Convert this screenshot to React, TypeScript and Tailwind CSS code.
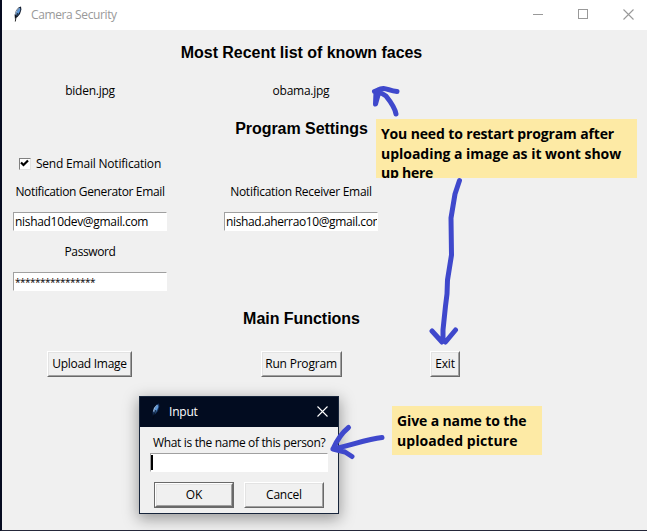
import type { ReactNode } from "react";

const uiFont = "font-['Open_Sans','Noto_Sans',sans-serif]";

function Feather({ dark = false }: { dark?: boolean }) {
  return (
    <svg width="10" height="16" viewBox="0 0 10 16" className="mb-[2px] shrink-0">
      <path d="M2 13.500 L1.600 9 L3 4.500 L5.500 1.500 L8 0.600 L8.400 3.500 L7 8 L4.500 11 L2.500 12 Z" fill={dark ? "#17345f" : "#111827"} />
      <path d="M3 9.500 L4 5 L7 1.600 L7.400 4 L5.700 8 L3.400 10.500 Z" fill="#5b96d8" />
      <path d="M2.500 8.500 L3.500 5 L6 2.200" stroke="#c3dcf5" strokeWidth="0.9" fill="none" />
      <path d="M2.300 15.500 L3 11 L5 7" stroke={dark ? "#050a14" : "#111"} strokeWidth="0.9" fill="none" />
    </svg>
  );
}

function Heading({ children }: { children: ReactNode }) {
  return (
    <h2 className="col-start-2 justify-self-center pt-[2px] pl-px whitespace-nowrap font-['Liberation_Sans',Arial,sans-serif] text-[16px] leading-5 font-bold tracking-[-0.04px]">
      {children}
    </h2>
  );
}

function Label({ children, track = "tracking-[-0.2px]" }: { children: ReactNode; track?: string }) {
  return <span className={`justify-self-center whitespace-nowrap ${track}`}>{children}</span>;
}

function Entry({ children, track }: { children: ReactNode; track: string }) {
  return (
    <div className={`flex h-[19px] w-[154px] items-center justify-self-center overflow-hidden border border-t-[#a0a0a0] border-r-white border-b-white border-l-[#a0a0a0] bg-white pl-px whitespace-nowrap ${track}`}>
      {children}
    </div>
  );
}

function Button({ children, size, track = "tracking-[-0.2px]" }: { children: ReactNode; size: string; track?: string }) {
  return (
    <button className={`${size} ${track} border border-t-white border-r-[#696969] border-b-[#696969] border-l-white bg-[#f0f0f0] whitespace-nowrap`}>
      <span className="flex h-full w-full items-center justify-center border border-t-[#e3e3e3] border-r-[#a0a0a0] border-b-[#a0a0a0] border-l-[#e3e3e3]">
        {children}
      </span>
    </button>
  );
}

function Close({ color }: { color: string }) {
  return (
    <svg width="11" height="11" viewBox="0 0 11 11" className="mb-px">
      <path d="M0.500 0.500 L10.500 10.500 M10.500 0.500 L0.500 10.500" stroke={color} strokeWidth="1.1" />
    </svg>
  );
}

export default function App() {
  return (
    <div className={`relative h-[531px] w-[647px] overflow-hidden border-b border-l-2 border-b-[#25283a] border-l-[#060b20] bg-[#f0f0f0] text-[12px] leading-4 text-black ${uiFont}`}>
      <header className="flex h-[30px] items-center bg-white pl-[11px] text-[#999]">
        <Feather />
        <span className="ml-[8px] tracking-[-0.38px]">Camera Security</span>
        <div className="mr-[13px] ml-auto flex items-center gap-[35px]">
          <span className="mb-px h-px w-[10px] bg-[#999]" />
          <span className="mb-[2px] h-[10px] w-[10px] border border-[#999]" />
          <Close color="#999" />
        </div>
      </header>

      <main className="grid grid-cols-[176px_246px_42px] grid-rows-[44px_34px_40px_30px_27px_33px_28px_31px_42px_50px] items-center">
        <Heading>Most Recent list of known faces</Heading>
        <span />
        <Label track="tracking-[-0.25px]">biden.jpg</Label>
        <Label track="tracking-[-0.25px]">obama.jpg</Label>
        <span />
        <Heading>Program Settings</Heading>
        <span />
        <label className="flex items-center gap-[5px] justify-self-center pt-px whitespace-nowrap">
          <span className="flex h-3 w-3 items-center justify-center border border-t-[#808080] border-r-[#e3e3e3] border-b-[#e3e3e3] border-l-[#808080] bg-white">
            <svg width="9" height="9" viewBox="0 0 9 9">
              <path d="M1 3.500 L3.500 6 L8 1.500" stroke="#000" strokeWidth="2.2" fill="none" />
            </svg>
          </span>
          <span className="pt-px tracking-[-0.2px]">Send Email Notification</span>
        </label>
        <span />
        <span />
        <Label track="tracking-[-0.36px]">Notification Generator Email</Label>
        <Label track="tracking-[-0.27px]">Notification Receiver Email</Label>
        <span />
        <Entry track="tracking-[-0.31px]">nishad10dev@gmail.com</Entry>
        <Entry track="tracking-[-0.38px]">nishad.aherrao10@gmail.com</Entry>
        <span />
        <Label track="tracking-[-0.4px]">Password</Label>
        <span />
        <span />
        <Entry track="text-[10px] tracking-[-0.5px]">****************</Entry>
        <span />
        <span />
        <Heading>Main Functions</Heading>
        <span />
        <div className="flex justify-center pr-px"><Button size="h-[26px] w-[85px]" track="tracking-[-0.28px]">Upload Image</Button></div>
        <div className="flex justify-center"><Button size="h-[26px] w-[81px]" track="tracking-[-0.2px]">Run Program</Button></div>
        <div className="flex justify-center"><Button size="h-[26px] w-[30px]">Exit</Button></div>
      </main>

      <section className="absolute top-[396px] left-[137px] flex h-[118px] w-[200px] flex-col border border-[#17253b] bg-[#f0f0f0] shadow-[0_4px_14px_1px_rgba(0,0,0,0.36)]">
        <div className="flex h-[30px] shrink-0 items-center bg-[#020c20] pr-[10px] pl-[11px] text-white">
          <Feather dark />
          <span className="ml-[8px] tracking-[-0.2px]">Input</span>
          <span className="ml-auto"><Close color="#fff" /></span>
        </div>
        <p className="mt-[8px] ml-[13px] whitespace-nowrap tracking-[-0.34px]">What is the name of this person?</p>
        <div className="mt-[2px] ml-[10px] flex h-[19px] w-[178px] items-center border border-t-[#a0a0a0] border-r-white border-b-white border-l-[#a0a0a0] bg-white">
          <span className="h-[15px] w-[2px] bg-black" />
        </div>
        <div className="mt-[10px] ml-[14px] flex gap-[10px]">
          <div className="flex border border-[#696969]"><Button size="h-[24px] w-[78px]">OK</Button></div>
          <Button size="h-[26px] w-[80px]">Cancel</Button>
        </div>
      </section>

      <aside className="absolute top-[119px] left-[374px] h-[59px] w-[261px] overflow-hidden bg-[#fdeaa5] pt-[5px] pl-[5px] text-[14px] leading-[19.5px] font-bold">
        <div className="whitespace-nowrap tracking-[-0.14px]">You need to restart program after</div>
        <div className="whitespace-nowrap tracking-[-0.03px]">uploading a image as it wont show</div>
        <div className="whitespace-nowrap tracking-[-0.25px]">up here</div>
      </aside>
      <aside className="absolute top-[406px] left-[390px] h-[49px] w-[150px] overflow-hidden bg-[#fdeaa5] pt-[5px] pl-[5px] text-[14px] leading-[19.5px] font-bold">
        <div className="whitespace-nowrap tracking-[-0.12px]">Give a name to the</div>
        <div className="whitespace-nowrap tracking-[0.08px]">uploaded picture</div>
      </aside>

      <svg className="absolute top-0 left-[-2px]" width="647" height="531" viewBox="0 0 647 531" fill="none" stroke="#3f48cc" strokeWidth="5" strokeLinecap="round" strokeLinejoin="round">
        <path d="M396 114 C395 108 390 101 386 96 L378 91 M374.500 91.500 L378 90 C385 86 388 91 397 91.500 M376 92 L375.500 104 L378 95" />
        <path d="M459.500 180.500 L455 194 L451 218 L451.500 255 L447.500 280 L447 294 L445.500 306 L443 330 L443 341 M432 331 L442 342 M455.500 330 L445.500 342" />
        <path d="M382 437.500 C367 439 352 445 333 449 M348.500 427.500 C343 432 337 440 333 449 M333 449 L345 452 L352 456.500" />
      </svg>
    </div>
  );
}
